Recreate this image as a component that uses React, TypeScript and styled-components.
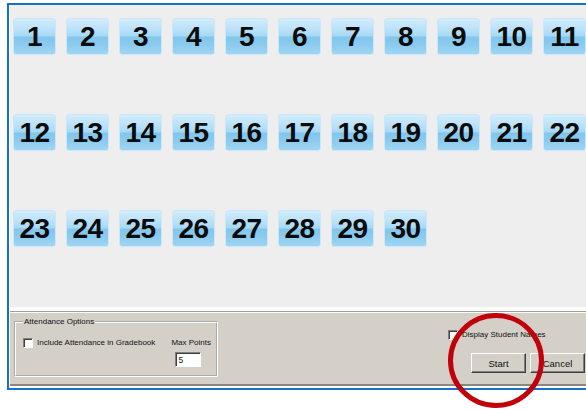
import React from 'react'
import styled, { createGlobalStyle } from 'styled-components'

const GlobalStyle = createGlobalStyle`
  html, body {
    margin: 0;
    padding: 0;
    background: #fff;
  }
  body {
    width: 586px;
    height: 410px;
    overflow: hidden;
  }
`

const Screen = styled.div`
  position: relative;
  width: 586px;
  height: 410px;
  overflow: hidden;
  box-sizing: border-box;
  padding: 3px 0 0 7px;
  font-family: "Liberation Sans", Arial, sans-serif;
`

const Frame = styled.div`
  width: 600px;
  border: 2px solid #1671c9;
  border-right: none;
  background: #fff;
  padding: 0 0 2px 1px;
`

const Board = styled.div`
  height: 302px;
  box-sizing: border-box;
  background: #eeeeee;
  padding: 13px 0 0 3px;
  display: grid;
  grid-template-columns: repeat(11, 43px);
  grid-auto-rows: 37px;
  column-gap: 10px;
  row-gap: 59px;
  align-content: start;
`

const Seat = styled.div`
  box-sizing: border-box;
  border: 1px solid #cbe7f8;
  border-radius: 3px;
  background: linear-gradient(
    to bottom,
    #d2ecfc 0%,
    #b9e1f9 30%,
    #a6d9f6 49%,
    #82c6ec 51%,
    #8ccbef 75%,
    #9fd6f5 100%
  );
  display: flex;
  align-items: center;
  justify-content: center;
  font-size: 28px;
  font-weight: 700;
  color: #0b0b0b;
  letter-spacing: -0.5px;
  line-height: 1;
`

const Panel = styled.div`
  height: 75px;
  box-sizing: border-box;
  background: #d4d0c8;
  border-bottom: 2px solid #8a8781;
  font-size: 8px;
  color: #111;
`

const Divider = styled.div`
  margin-top: 4px;
  border-top: 1px solid #a19e98;
  border-bottom: 1px solid #fbfbfa;
`

const Row = styled.div`
  display: flex;
  align-items: flex-start;
  padding: 0 25px 0 4px;
`

const Group = styled.fieldset`
  box-sizing: border-box;
  width: 204px;
  height: 60px;
  margin: 4px 0 0 0;
  padding: 0 5px 0 7px;
  border: 2px groove #ffffff;
  display: flex;
  align-items: flex-start;
`

const Legend = styled.legend`
  padding: 0 1px;
  line-height: 10px;
  font-size: 8px;
`

const CheckLine = styled.label`
  display: flex;
  align-items: center;
  gap: 4px;
  line-height: 10px;
  margin-top: ${p => p.$top ?? 0}px;
`

const Check = styled.span`
  display: inline-block;
  width: 10px;
  height: 10px;
  box-sizing: border-box;
  background: #fff;
  border: 1px solid;
  border-color: #808080 #fff #fff #808080;
  box-shadow: inset 1px 1px 0 #404040;
`

const PointsColumn = styled.div`
  margin-left: auto;
  margin-top: 11px;
  display: flex;
  flex-direction: column;
  line-height: 10px;
`

const PointsBox = styled.div`
  width: 26px;
  height: 15px;
  box-sizing: border-box;
  margin: 4px 0 0 4px;
  background: #fff;
  border: 1px solid;
  border-color: #808080 #fff #fff #808080;
  box-shadow: inset 1px 1px 0 #404040;
  padding: 2px 0 0 2px;
  line-height: 10px;
  font-size: 8.5px;
`

const Controls = styled.div`
  margin-left: auto;
  padding-top: 17px;
  display: flex;
  flex-direction: column;
  align-items: flex-start;
`

const Buttons = styled.div`
  display: flex;
  gap: 4px;
  margin: 13px 0 0 23px;
`

const Button = styled.button`
  width: 55px;
  height: 20px;
  box-sizing: border-box;
  padding: 0;
  background: #d4d0c8;
  border: 1px solid;
  border-color: #fff #404040 #404040 #fff;
  box-shadow: inset -1px -1px 0 #808080;
  font-family: "Liberation Sans", Arial, sans-serif;
  font-size: 9.5px;
  color: #111;
`

const Marker = styled.svg`
  position: absolute;
  left: 446px;
  top: 311px;
  width: 100px;
  height: 100px;
  overflow: visible;
`

const seats = Array.from({ length: 30 }, (_, i) => i + 1)

export default function App() {
  return (
    <Screen>
      <GlobalStyle />
      <Frame>
        <Board>
          {seats.map(n => (
            <Seat key={n}>{n}</Seat>
          ))}
        </Board>
        <Panel>
          <Divider />
          <Row>
            <Group>
              <Legend>Attendance Options</Legend>
              <CheckLine $top={11}>
                <Check />
                Include Attendance in Gradebook
              </CheckLine>
              <PointsColumn>
                Max Points
                <PointsBox>5</PointsBox>
              </PointsColumn>
            </Group>
            <Controls>
              <CheckLine>
                <Check />
                Display Student Names
              </CheckLine>
              <Buttons>
                <Button>Start</Button>
                <Button>Cancel</Button>
              </Buttons>
            </Controls>
          </Row>
        </Panel>
      </Frame>
      <Marker viewBox="0 0 100 100">
        <ellipse cx="50" cy="49.5" rx="45.5" ry="45" fill="none" stroke="#c1000b" strokeWidth="5" />
      </Marker>
    </Screen>
  )
}
